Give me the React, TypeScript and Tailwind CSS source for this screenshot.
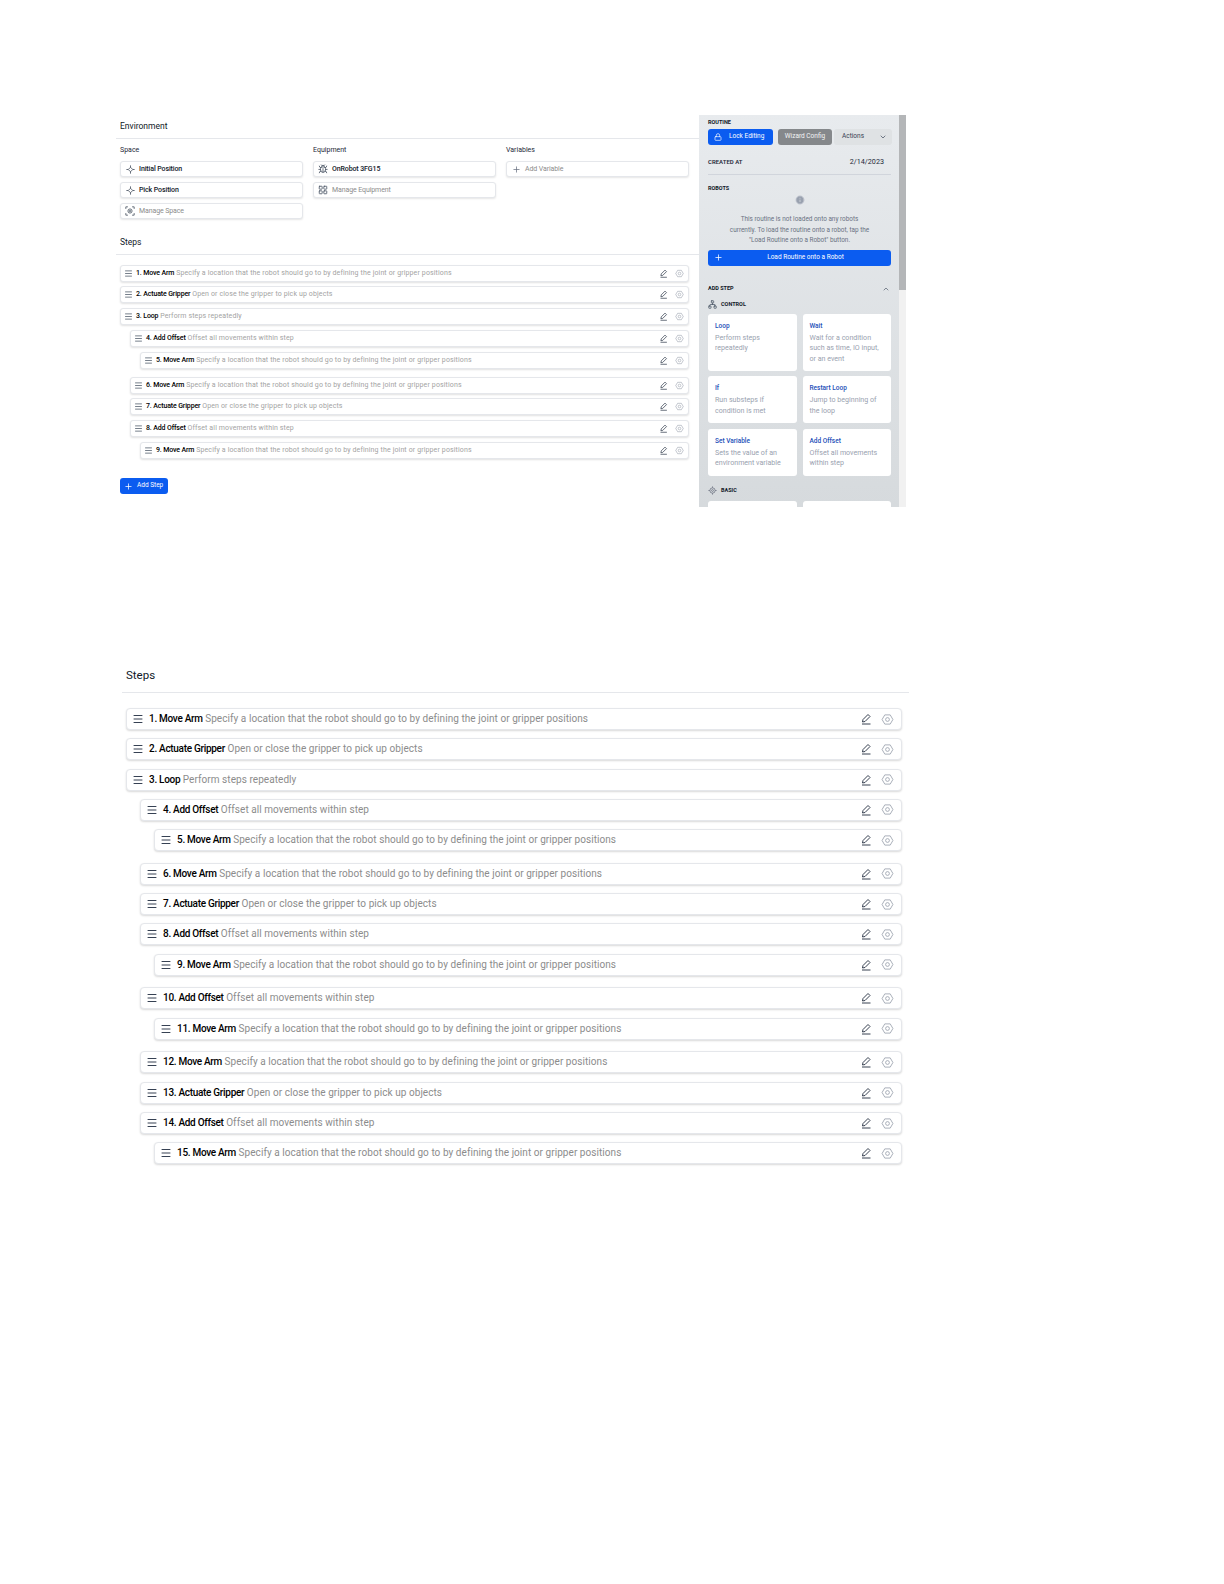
import { Bug, ChevronDown, ChevronUp, Info, LayoutGrid, Lock, Menu, Network, Plus } from "lucide-react";

type Step = { n: number; name: string; desc: string; depth: number; gap: boolean };

const MOVE = "Specify a location that the robot should go to by defining the joint or gripper positions";
const GRIP = "Open or close the gripper to pick up objects";
const OFFSET = "Offset all movements within step";

const topSteps: Step[] = [
  { n: 1, name: "Move Arm", desc: MOVE, depth: 0, gap: false },
  { n: 2, name: "Actuate Gripper", desc: GRIP, depth: 0, gap: false },
  { n: 3, name: "Loop", desc: "Perform steps repeatedly", depth: 0, gap: false },
  { n: 4, name: "Add Offset", desc: OFFSET, depth: 1, gap: false },
  { n: 5, name: "Move Arm", desc: MOVE, depth: 2, gap: false },
  { n: 6, name: "Move Arm", desc: MOVE, depth: 1, gap: true },
  { n: 7, name: "Actuate Gripper", desc: GRIP, depth: 1, gap: false },
  { n: 8, name: "Add Offset", desc: OFFSET, depth: 1, gap: false },
  { n: 9, name: "Move Arm", desc: MOVE, depth: 2, gap: false },
];

const allSteps: Step[] = [
  ...topSteps,
  { n: 10, name: "Add Offset", desc: OFFSET, depth: 1, gap: true },
  { n: 11, name: "Move Arm", desc: MOVE, depth: 2, gap: false },
  { n: 12, name: "Move Arm", desc: MOVE, depth: 1, gap: true },
  { n: 13, name: "Actuate Gripper", desc: GRIP, depth: 1, gap: false },
  { n: 14, name: "Add Offset", desc: OFFSET, depth: 1, gap: false },
  { n: 15, name: "Move Arm", desc: MOVE, depth: 2, gap: false },
];

const cards = [
  { title: "Loop", text: "Perform steps repeatedly", tall: true },
  { title: "Wait", text: "Wait for a condition such as time, IO input, or an event", tall: true },
  { title: "If", text: "Run substeps if condition is met", tall: false },
  { title: "Restart Loop", text: "Jump to beginning of the loop", tall: false },
  { title: "Set Variable", text: "Sets the value of an environment variable", tall: false },
  { title: "Add Offset", text: "Offset all movements within step", tall: false },
];

function HexIcon({ size }: { size: number }) {
  return (
    <svg width={size} height={size} viewBox="0 0 24 24" fill="none" stroke="#9ca3af" strokeWidth="1.6" className="shrink-0">
      <path d="M7 3.5h10l5 8.500-5 8.500H7l-5-8.500z" strokeLinejoin="round" />
      <circle cx="12" cy="12" r="3.500" />
    </svg>
  );
}

// pencil sitting on a baseline, as in the step rows
function EditIcon({ size }: { size: number }) {
  return (
    <svg width={size} height={size} viewBox="0 0 24 24" fill="none" stroke="#374151" strokeWidth="2" className="shrink-0">
      <path d="M4 22h17" />
      <path d="M5 18l1-5L16 3l4 4L10 17z" strokeLinejoin="round" />
    </svg>
  );
}

function TargetIcon() {
  return (
    <svg width="9" height="9" viewBox="0 0 24 24" fill="none" stroke="#374151" strokeWidth="2" className="shrink-0">
      <path d="M12 6l6 6-6 6-6-6z" />
      <path d="M12 1v5M12 18v5M1 12h5M18 12h5" />
    </svg>
  );
}

function ScanIcon() {
  return (
    <svg width="10" height="10" viewBox="0 0 24 24" fill="none" stroke="#4b5563" strokeWidth="2" className="shrink-0">
      <path d="M2 7V2h5M17 2h5v5M22 17v5h-5M7 22H2v-5" />
      <circle cx="12" cy="12" r="5" />
      <circle cx="12" cy="12" r="1.500" />
    </svg>
  );
}

function BasicIcon() {
  return (
    <svg width="9" height="9" viewBox="0 0 24 24" fill="none" stroke="#6b7280" strokeWidth="2" className="shrink-0">
      <circle cx="12" cy="12" r="7" />
      <circle cx="12" cy="12" r="2.500" />
      <path d="M12 1v4M12 19v4M1 12h4M19 12h4" />
    </svg>
  );
}

function SmallRow({ step }: { step: Step }) {
  return (
    <div
      className={`flex h-[17px] items-center rounded-[3px] border border-gray-200 bg-white pr-[4px] shadow-[0_1px_2px_rgba(0,0,0,0.12)] ${
        step.depth === 0 ? "ml-0" : step.depth === 1 ? "ml-[10px]" : "ml-[20px]"
      } ${step.gap ? "mt-[7.500px]" : "mt-[4.900px] first:mt-0"}`}
    >
      <Menu className="ml-[3px] h-[9px] w-[9px] shrink-0 text-gray-600" />
      <p className="ml-[3px] text-[7px] leading-none tracking-[0.018em] whitespace-nowrap text-[#a3a3a3]">
        <span className="font-medium tracking-[-0.02em] text-black">{step.n}. {step.name}</span> {step.desc}
      </p>
      <span className="ml-auto"><EditIcon size={9} /></span>
      <span className="ml-[7px]"><HexIcon size={9} /></span>
    </div>
  );
}

function BigRow({ step }: { step: Step }) {
  return (
    <div
      className={`flex h-[22px] items-center rounded-[4px] border border-gray-200 bg-white pr-[7px] shadow-[0_1px_2px_rgba(0,0,0,0.15)] ${
        step.depth === 0 ? "ml-0" : step.depth === 1 ? "ml-[14px]" : "ml-[28px]"
      } ${step.gap ? "mt-[11.700px]" : "mt-[8.300px] first:mt-0"}`}
    >
      <Menu className="ml-[5px] h-[12px] w-[12px] shrink-0 text-gray-700" />
      <p className="ml-[5px] text-[10px] leading-none tracking-[0.006em] whitespace-nowrap text-[#8c8c8c]">
        <span className="font-medium tracking-[-0.03em] text-black">{step.n}. {step.name}</span> {step.desc}
      </p>
      <span className="ml-auto"><EditIcon size={12} /></span>
      <span className="ml-[9px]"><HexIcon size={13} /></span>
    </div>
  );
}

function Field({ icon, label, muted }: { icon: React.ReactNode; label: string; muted?: boolean }) {
  return (
    <div className="flex h-[16px] items-center rounded-[3px] border border-gray-200 bg-white shadow-[0_1px_2px_rgba(0,0,0,0.1)]">
      <span className="flex w-[18px] shrink-0 justify-center">{icon}</span>
      <span className={`text-[7px] tracking-[-0.015em] ${muted ? "text-[#8c8c8c]" : "font-medium text-gray-900"}`}>{label}</span>
    </div>
  );
}

function Sidebar() {
  return (
    <div className="flex h-[392px] w-[207px] shrink-0 overflow-hidden bg-gradient-to-b from-[#e8ebee] to-[#d6dadd]">
      <div className="w-[200px] shrink-0 pt-[4px] pr-[8px] pl-[9px]">
        <p className="text-[5.5px] leading-[7px] font-bold text-gray-900">ROUTINE</p>
        <div className="mt-[3px] flex h-[16px] items-stretch text-[6.5px]">
          <div className="flex w-[65px] shrink-0 items-center rounded-[3px] bg-[#0b5cf0] pl-[6px] text-white">
            <Lock className="h-[8px] w-[8px]" />
            <span className="ml-[7px]">Lock Editing</span>
          </div>
          <div className="ml-[5px] flex w-[54px] shrink-0 items-center justify-center rounded-[3px] bg-[#85888b] text-gray-100">Wizard Config</div>
          <div className="ml-[2px] flex w-[58px] shrink-0 items-center justify-between rounded-[3px] bg-[#dfe2e4] pr-[5px] pl-[8px] text-gray-700">
            Actions <ChevronDown className="h-[8px] w-[8px]" />
          </div>
        </div>
        <div className="mt-[13px] flex items-center justify-between border-b border-gray-300 pr-[7px] pb-[8px] text-[7.200px] leading-[8px] text-gray-800">
          <span className="text-[6px] font-semibold">CREATED AT</span>
          <span>2/14/2023</span>
        </div>
        <p className="mt-[10px] text-[5.5px] leading-[7px] font-bold text-gray-900">ROBOTS</p>
        <div className="mt-[3px] flex justify-center"><Info className="h-[10px] w-[10px] fill-gray-400 text-gray-300" /></div>
        <p className="mx-auto mt-[9px] w-[144px] text-center text-[6.400px] leading-[10.500px] text-gray-500">
          This routine is not loaded onto any robots currently. To load the routine onto a robot, tap the "Load Routine onto a Robot" button.
        </p>
        <div className="mt-[4px] flex h-[16px] items-center rounded-[3px] bg-[#0b5cf0] pl-[6px] text-[6.5px] text-white">
          <Plus className="h-[9px] w-[9px]" />
          <span className="flex-1 pr-[3px] text-center">Load Routine onto a Robot</span>
        </div>
        <div className="mt-[19px] flex items-center justify-between pr-[1px] text-[5.5px] leading-[7px] font-bold text-gray-900">
          ADD STEP <ChevronUp className="h-[8px] w-[8px] text-gray-600" />
        </div>
        <div className="mt-[7px] flex items-center gap-[4px] text-[5.5px] leading-[7px] font-bold text-gray-900">
          <Network className="h-[9px] w-[9px] text-gray-600" /> CONTROL
        </div>
        <div className="mt-[5px] grid grid-cols-2 gap-x-[6px] gap-y-[5.500px]">
          {cards.map((c) => (
            <div key={c.title} className={`rounded-[3px] bg-white px-[7px] pt-[8px] ${c.tall ? "h-[57px]" : "h-[47px]"}`}>
              <p className="text-[6.5px] leading-[9px] font-medium text-[#1d4fb8]">{c.title}</p>
              <p className="mt-[2px] text-[7.100px] leading-[10.500px] text-gray-400">{c.text}</p>
            </div>
          ))}
        </div>
        <div className="mt-[10px] flex items-center gap-[4px] text-[5.5px] leading-[7px] font-bold text-gray-900">
          <BasicIcon /> BASIC
        </div>
        <div className="mt-[6px] grid grid-cols-2 gap-x-[6px]">
          <div className="h-[47px] rounded-[3px] bg-white" />
          <div className="h-[47px] rounded-[3px] bg-white" />
        </div>
      </div>
      <div className="w-[7px] bg-[#f1f1f1]">
        <div className="h-[175px] bg-[#b4b6b8]" />
      </div>
    </div>
  );
}

export default function App() {
  return (
    <div className="h-[1584px] w-[1224px] bg-white pt-[115px] font-['Roboto',sans-serif]">
      <div className="flex h-[392px] pl-[116px]">
        <div className="w-[583px] shrink-0">
          <div className="border-b border-gray-200 px-[4px] pb-[7px]">
            <h2 className="pt-[6px] text-[8.500px] leading-[10px] text-gray-900">Environment</h2>
          </div>
          <div className="mt-[7px] grid w-[573px] grid-cols-3 gap-x-[10px] pl-[4px]">
            <div className="flex flex-col gap-[5px]">
              <p className="mb-[1px] text-[7px] leading-[9px] text-gray-800">Space</p>
              <Field icon={<TargetIcon />} label="Initial Position" />
              <Field icon={<TargetIcon />} label="Pick Position" />
              <Field icon={<ScanIcon />} label="Manage Space" muted />
            </div>
            <div className="flex flex-col gap-[5px]">
              <p className="mb-[1px] text-[7px] leading-[9px] text-gray-800">Equipment</p>
              <Field icon={<Bug className="h-[10px] w-[10px] text-gray-600" />} label="OnRobot 3FG15" />
              <Field icon={<LayoutGrid className="h-[10px] w-[10px] text-gray-600" />} label="Manage Equipment" muted />
            </div>
            <div className="flex flex-col gap-[5px]">
              <p className="mb-[1px] text-[7px] leading-[9px] text-gray-800">Variables</p>
              <Field icon={<Plus className="h-[9px] w-[9px] text-gray-500" />} label="Add Variable" muted />
            </div>
          </div>
          <div className="mt-[17.500px] border-b border-gray-200 px-[4px] pb-[7px]">
            <h2 className="text-[8.500px] leading-[10px] text-gray-900">Steps</h2>
          </div>
          <div className="mt-[10px] flex w-[573px] flex-col pl-[4px]">
            {topSteps.map((s) => <SmallRow key={s.n} step={s} />)}
          </div>
          <div className="mt-[19px] ml-[4px] flex h-[16px] w-[48px] items-center rounded-[3px] bg-[#0b5cf0] pl-[4px] text-[6.5px] text-white">
            <Plus className="h-[9px] w-[9px]" />
            <span className="ml-[4px]">Add Step</span>
          </div>
        </div>
        <Sidebar />
      </div>
      <div className="mt-[161px] ml-[122px] w-[787px]">
        <div className="border-b border-gray-200 px-[4px] pb-[10px]">
          <h2 className="text-[11.500px] leading-[14px] text-gray-900">Steps</h2>
        </div>
        <div className="mt-[15px] mr-[7px] ml-[4px] flex flex-col">
          {allSteps.map((s) => <BigRow key={s.n} step={s} />)}
        </div>
      </div>
    </div>
  );
}
